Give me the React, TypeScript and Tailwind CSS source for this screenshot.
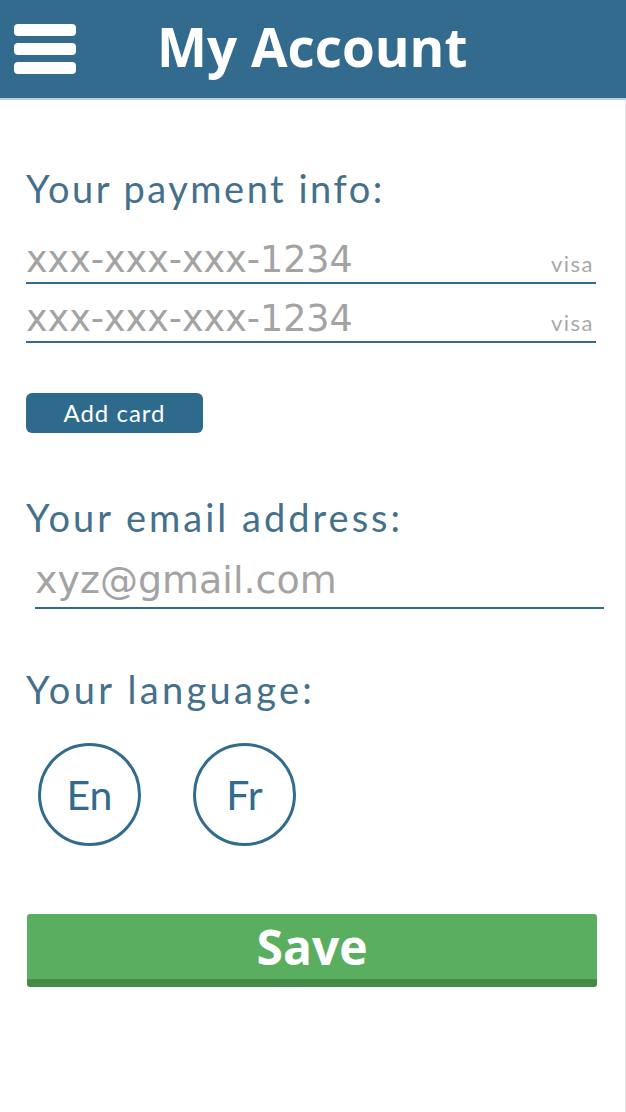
import React, { useState } from 'react';

const cards = ['xxx-xxx-xxx-1234', 'xxx-xxx-xxx-1234'];

export default function App() {
  const [language, setLanguage] = useState<'En' | 'Fr'>('En');

  return (
    <div className="w-[626px] min-h-[1112px] bg-white font-['Lato',sans-serif]">
      <header className="h-[100px] bg-[#336b8e] border-b-2 border-[#b9d0df] flex items-center">
        <button className="ml-[14px] flex flex-col gap-[7px]" aria-label="Menu">
          <span className="block w-[62px] h-[12px] rounded-[4px] bg-white" />
          <span className="block w-[62px] h-[12px] rounded-[4px] bg-white" />
          <span className="block w-[62px] h-[12px] rounded-[4px] bg-white" />
        </button>
        <h1 className="ml-[81px] -mt-[6px] text-[53px] leading-none font-bold text-white font-['Open_Sans',sans-serif]">
          My Account
        </h1>
      </header>

      <main className="min-h-[1012px] border-r border-[#e4e4e4] pl-[26px] pt-[66px]">
        <h2 className="text-[38px] leading-[44px] tracking-[2.5px] text-[#44708c]">Your payment info:</h2>

        <div className="mt-[15px] w-[570px]">
          {cards.map((card, i) => (
            <div key={i} className="h-[59px] flex items-baseline justify-between border-b-2 border-[#336b8e] pt-[13px]">
              <span className="text-[36.5px] leading-[44px] text-[#a3a3a3] font-['DejaVu_Sans',sans-serif]">{card}</span>
              <span className="pr-[2px] text-[22px] tracking-[1.5px] text-[#a8a8a8]">visa</span>
            </div>
          ))}
        </div>

        <button className="mt-[50px] w-[177px] h-[40px] rounded-[6px] bg-[#2e6a8c] text-white text-[24px] tracking-[1px] flex items-center justify-center">
          Add card
        </button>

        <h2 className="mt-[62px] text-[38px] leading-[44px] tracking-[3px] text-[#44708c]">Your email address:</h2>

        <div className="ml-[9px] mt-[14px] w-[569px] h-[56px] pt-[5px] border-b-2 border-[#336b8e]">
          <span className="text-[38px] leading-[44px] text-[#a3a3a3] font-['DejaVu_Sans',sans-serif]">xyz@gmail.com</span>
        </div>

        <h2 className="mt-[58px] text-[38px] leading-[44px] tracking-[3.3px] text-[#44708c]">Your language:</h2>

        <div className="ml-[12px] mt-[32px] flex items-center gap-[52px]">
          {(['En', 'Fr'] as const).map((lang) => (
            <button
              key={lang}
              onClick={() => setLanguage(lang)}
              aria-pressed={language === lang}
              className="w-[103px] h-[103px] rounded-full border-[3px] border-[#336b8e] bg-white flex items-center justify-center text-[41px] text-[#336b8e]"
            >
              {lang}
            </button>
          ))}
        </div>

        <button className="mt-[68px] ml-[1px] w-[570px] h-[73px] rounded-[3px] bg-[#5aae5f] border-b-[8px] border-[#468a4a] flex items-center justify-center text-[48px] font-bold text-white font-['Open_Sans',sans-serif]">
          Save
        </button>
      </main>
    </div>
  );
}
